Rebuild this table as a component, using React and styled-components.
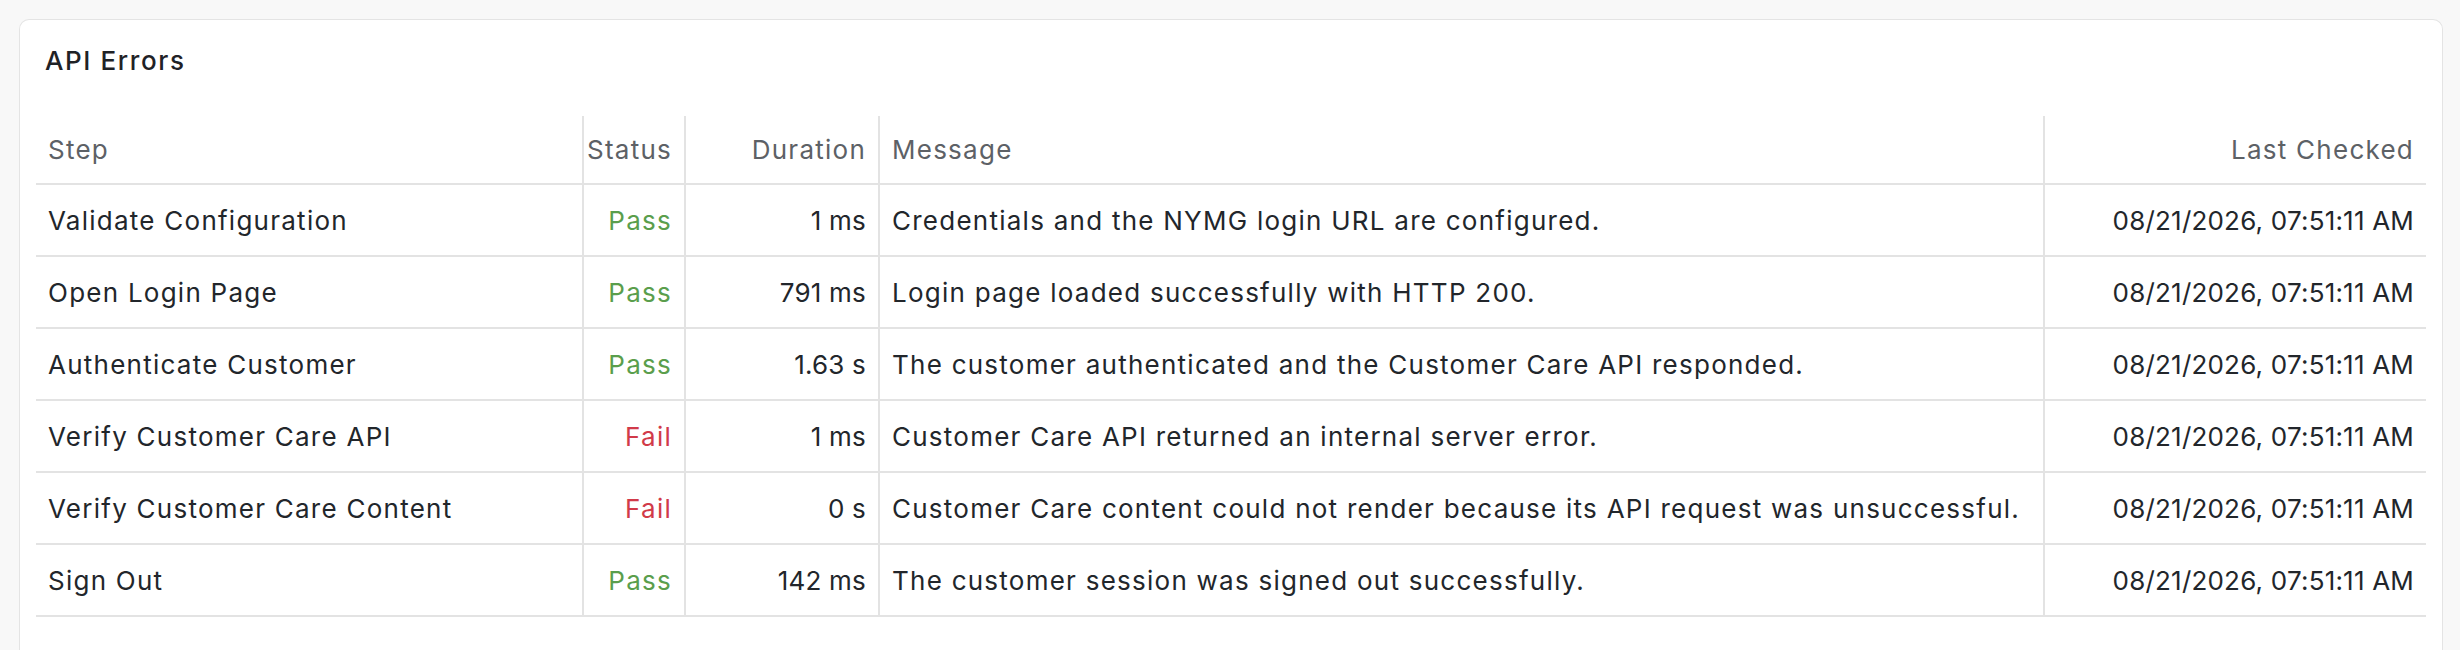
import React from 'react';
import styled, { createGlobalStyle } from 'styled-components';

const GlobalStyle = createGlobalStyle`
  html, body {
    margin: 0;
    background: #f8f8f8;
    font-family: Inter, "Noto Sans", "Liberation Sans", sans-serif;
  }
`;

const Page = styled.div`
  padding: 19px 17px 0 19px;
`;

const Card = styled.section`
  background: #ffffff;
  border: 1.5px solid #e4e4e4;
  border-bottom: none;
  border-radius: 10px 10px 0 0;
  padding: 0 16px 40px 16px;
  min-height: 620px;
  box-sizing: border-box;
`;

const Title = styled.h2`
  margin: 0;
  padding: 25px 0 0 9px;
  font-size: 26px;
  line-height: 32px;
  letter-spacing: 1.6px;
  font-weight: 500;
  color: #1f2226;
`;

const Table = styled.table`
  width: 100%;
  margin-top: 39px;
  border-collapse: collapse;
  table-layout: fixed;
  font-size: 26px;
  letter-spacing: 1.25px;
  color: #22262b;
`;

const Th = styled.th`
  height: 67px;
  padding: 0 12px 0 ${(p) => (p.$tight ? '0' : '12px')};
  font-weight: 400;
  color: #5d6166;
  text-align: ${(p) => p.$align || 'left'};
  border-bottom: 2px solid #e3e3e3;
  border-left: ${(p) => (p.$first ? 'none' : '2px solid #e3e3e3')};
  white-space: nowrap;
`;

const Td = styled.td`
  height: 70px;
  padding: 0 12px;
  text-align: ${(p) => p.$align || 'left'};
  letter-spacing: ${(p) => p.$spacing || 'inherit'};
  border-bottom: 2px solid #e3e3e3;
  border-left: ${(p) => (p.$first ? 'none' : '2px solid #e3e3e3')};
  white-space: nowrap;
`;

const Status = styled.span`
  color: ${(p) => (p.$pass ? '#5a9e4c' : '#d13a49')};
`;

const columns = [
  { key: 'step', label: 'Step', width: 547, align: 'left' },
  { key: 'status', label: 'Status', width: 102, align: 'right', tight: true },
  { key: 'duration', label: 'Duration', width: 194, align: 'right' },
  { key: 'message', label: 'Message', width: 1165, align: 'left' },
  { key: 'checked', label: 'Last Checked', align: 'right' },
];

const rows = [
  ['Validate Configuration', true, '1 ms', 'Credentials and the NYMG login URL are configured.'],
  ['Open Login Page', true, '791 ms', 'Login page loaded successfully with HTTP 200.'],
  ['Authenticate Customer', true, '1.63 s', 'The customer authenticated and the Customer Care API responded.'],
  ['Verify Customer Care API', false, '1 ms', 'Customer Care API returned an internal server error.'],
  ['Verify Customer Care Content', false, '0 s', 'Customer Care content could not render because its API request was unsuccessful.'],
  ['Sign Out', true, '142 ms', 'The customer session was signed out successfully.'],
];

const CHECKED = '08/21/2026, 07:51:11 AM';

export default function App() {
  return (
    <>
      <GlobalStyle />
      <Page>
        <Card>
          <Title>API Errors</Title>
          <Table>
            <colgroup>
              {columns.map((c) => (
                <col key={c.key} style={c.width ? { width: c.width } : undefined} />
              ))}
            </colgroup>
            <thead>
              <tr>
                {columns.map((c, i) => (
                  <Th key={c.key} $align={c.align} $first={i === 0} $tight={c.tight}>
                    {c.label}
                  </Th>
                ))}
              </tr>
            </thead>
            <tbody>
              {rows.map(([step, pass, duration, message]) => (
                <tr key={step}>
                  <Td $first>{step}</Td>
                  <Td $align="right">
                    <Status $pass={pass}>{pass ? 'Pass' : 'Fail'}</Status>
                  </Td>
                  <Td $align="right" $spacing="0.2px">{duration}</Td>
                  <Td>{message}</Td>
                  <Td $align="right" $spacing="0.2px">{CHECKED}</Td>
                </tr>
              ))}
            </tbody>
          </Table>
        </Card>
      </Page>
    </>
  );
}
